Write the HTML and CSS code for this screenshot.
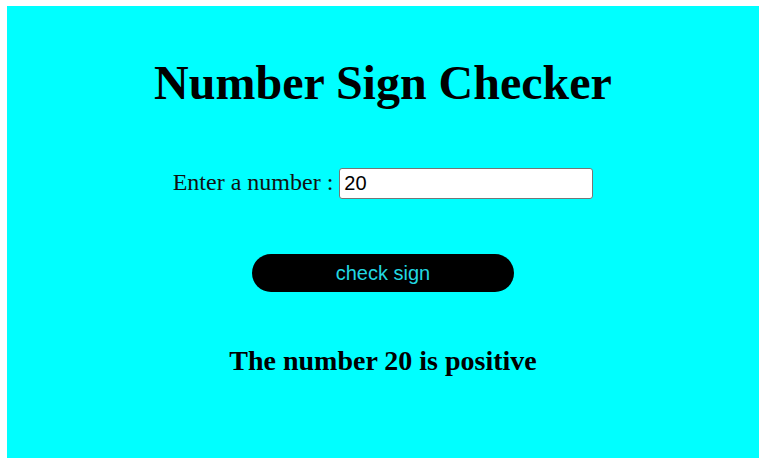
FILE: index.html
```html
<!DOCTYPE html>
<html lang="en">
<head>
<meta charset="utf-8">
<title>Number Sign Checker</title>
<link rel="stylesheet" href="styles.css">
</head>
<body>
<main class="page">
  <h1 class="title">Number Sign Checker</h1>
  <div class="field">
    <label class="label" for="num">Enter a number :</label>
    <input class="input" id="num" type="text" value="20">
  </div>
  <button class="btn" type="button">check sign</button>
  <h2 class="result">The number 20 is positive</h2>
</main>
</body>
</html>
```
FILE: styles.css
```css
html, body {
  margin: 0;
  padding: 0;
  background: #ffffff;
}
.page {
  margin: 6px 4px 0 7px;
  height: 452px;
  background: #00ffff;
  display: flex;
  flex-direction: column;
  align-items: center;
  padding-top: 49px;
  box-sizing: border-box;
  font-family: "Liberation Serif", "Times New Roman", serif;
  color: #000;
}
.title {
  margin: 0;
  font-size: 48px;
  line-height: 56px;
  font-weight: bold;
}
.field {
  display: flex;
  align-items: baseline;
  gap: 6px;
  margin-top: 57px;
}
.label {
  font-size: 24px;
  color: #111;
}
.input {
  width: 254px;
  height: 31px;
  box-sizing: border-box;
  border: 1px solid #767676;
  border-radius: 3px;
  padding: 1px 4px;
  font-family: "Liberation Sans", Arial, sans-serif;
  font-size: 20px;
  color: #000;
  background: #fff;
}
.btn {
  margin-top: 55px;
  width: 262px;
  height: 38px;
  border: none;
  border-radius: 19px;
  background: #000;
  color: #22d8e2;
  font-family: "Liberation Sans", Arial, sans-serif;
  font-size: 20px;
  padding: 0;
}
.result {
  margin: 53px 0 0;
  font-size: 28px;
  line-height: 32px;
  font-weight: bold;
}
```
